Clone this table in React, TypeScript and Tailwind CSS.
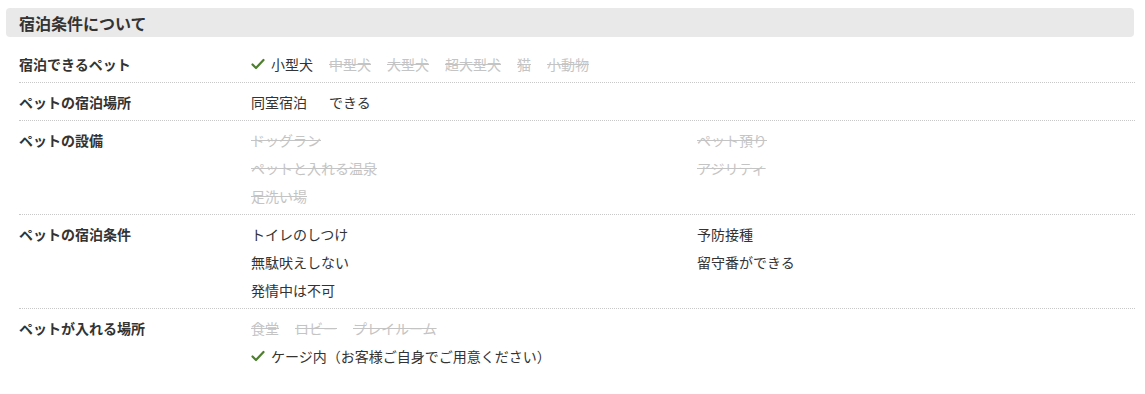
import React from "react";

const Check = () => (
  <svg width="14" height="12" viewBox="0 0 14 12" className="mr-[6px] inline-block shrink-0">
    <path d="M1.5 6.5 L5 10 L12.5 2" fill="none" stroke="#4d7f2e" strokeWidth="2.2" strokeLinecap="round" strokeLinejoin="round" />
  </svg>
);

const Off = ({ children }: { children: React.ReactNode }) => (
  <span className="mr-[16px] text-[#c4c4c4] line-through decoration-[#c4c4c4]">{children}</span>
);

const On = ({ children }: { children: React.ReactNode }) => (
  <span className="mr-[16px] inline-flex items-center text-[#333]">
    <Check />
    {children}
  </span>
);

const Row = ({ label, children, first }: { label: string; children: React.ReactNode; first?: boolean }) => (
  <div className={`flex border-b border-dotted border-[#c8c8c8] pt-[5px] pb-[4px] ${first ? "mt-[8px]" : ""}`}>
    <div className="w-[232px] shrink-0 font-bold text-[#333] leading-[28px]">{label}</div>
    <div className="flex-1 leading-[28px]">{children}</div>
  </div>
);

export default function App() {
  return (
    <div
      className="w-[1145px] h-[394px] bg-white text-[14px] text-[#333]"
      style={{ fontFamily: '"Noto Sans CJK JP", "Noto Sans", sans-serif' }}
    >
      <div className="pt-[8px] px-[6px] pr-[11px]">
        <div className="h-[29px] rounded-[4px] bg-[#e9e9e9] pl-[13px] flex items-center text-[16px] font-bold text-[#333]">
          宿泊条件について
        </div>
      </div>
      <div className="ml-[19px] mr-[10px]">
        <Row label="宿泊できるペット" first>
          <div className="flex items-center">
            <On>小型犬</On>
            <Off>中型犬</Off>
            <Off>大型犬</Off>
            <Off>超大型犬</Off>
            <Off>猫</Off>
            <Off>小動物</Off>
          </div>
        </Row>
        <Row label="ペットの宿泊場所">
          <span>同室宿泊</span>
          <span className="ml-[22px]">できる</span>
        </Row>
        <Row label="ペットの設備">
          <div className="grid grid-cols-[446px_1fr]">
            <div><Off>ドッグラン</Off></div>
            <div><Off>ペット預り</Off></div>
            <div><Off>ペットと入れる温泉</Off></div>
            <div><Off>アジリティ</Off></div>
            <div><Off>足洗い場</Off></div>
          </div>
        </Row>
        <Row label="ペットの宿泊条件">
          <div className="grid grid-cols-[446px_1fr]">
            <div>トイレのしつけ</div>
            <div>予防接種</div>
            <div>無駄吠えしない</div>
            <div>留守番ができる</div>
            <div>発情中は不可</div>
          </div>
        </Row>
        <div className="flex pt-[5px]">
          <div className="w-[232px] shrink-0 font-bold leading-[28px]">ペットが入れる場所</div>
          <div className="flex-1 leading-[28px]">
            <div>
              <Off>食堂</Off>
              <Off>ロビー</Off>
              <Off>プレイルーム</Off>
            </div>
            <div className="flex items-center">
              <Check />
              <span>ケージ内（お客様ご自身でご用意ください）</span>
            </div>
          </div>
        </div>
      </div>
    </div>
  );
}
